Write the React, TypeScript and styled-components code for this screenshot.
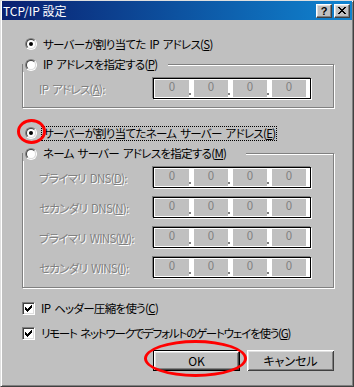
import React from "react";
import styled, { createGlobalStyle } from "styled-components";

const face = "#c0c0c0";

const GlobalStyle = createGlobalStyle`
  html, body {
    margin: 0;
    padding: 0;
    background: ${face};
  }
  body {
    font-family: "Noto Sans CJK JP", "Noto Sans", sans-serif;
    font-size: 11.5px;
    letter-spacing: -0.7px;
    word-spacing: 2px;
    font-feature-settings: "palt";
    color: #000;
  }
`;

const Window = styled.div`
  position: relative;
  box-sizing: border-box;
  width: 354px;
  height: 387px;
  background: ${face};
  border: 1px solid;
  border-color: #dfdfdf #404040 #404040 #dfdfdf;
  box-shadow: inset 1px 1px 0 #fff, inset -1px -1px 0 #808080;
  display: flex;
  flex-direction: column;
  overflow: hidden;
`;

const TitleBar = styled.div`
  height: 19px;
  margin: 0 1px;
  padding: 0 2px 0 1px;
  display: flex;
  align-items: center;
  background: linear-gradient(90deg, #0a2070 0%, #1084d0 100%);
  color: #fff;
  font-size: 12px;
  letter-spacing: 0;
  word-spacing: 0;
  line-height: 19px;
`;

const TitleText = styled.span`
  flex: 1;
  white-space: nowrap;
`;

const CaptionButton = styled.div`
  box-sizing: border-box;
  width: 16px;
  height: 14px;
  margin-left: 2px;
  background: ${face};
  border: 1px solid;
  border-color: #fff #404040 #404040 #fff;
  box-shadow: inset -1px -1px 0 #808080, inset 1px 1px 0 #dfdfdf;
  display: flex;
  align-items: center;
  justify-content: center;
  color: #000;
  font-family: "Liberation Sans", sans-serif;
  font-weight: bold;
  font-size: 11px;
  line-height: 12px;
`;

const Body = styled.div`
  display: flex;
  flex-direction: column;
  padding: 0 19px 0 21px;
`;

const OptionRow = styled.label<{ $top: number }>`
  display: flex;
  align-items: center;
  height: 16px;
  margin-top: ${(p) => p.$top}px;
  padding-left: 3px;
  gap: 4px;
  white-space: nowrap;
`;

const RadioOuter = styled.span`
  box-sizing: border-box;
  flex: none;
  width: 12px;
  height: 12px;
  border-radius: 50%;
  border: 1px solid;
  border-color: #808080 #fff #fff #808080;
  display: flex;
`;

const RadioInner = styled.span<{ $checked?: boolean }>`
  box-sizing: border-box;
  flex: 1;
  border-radius: 50%;
  border: 1px solid;
  border-color: #404040 #dfdfdf #dfdfdf #404040;
  background: #fff;
  display: flex;
  align-items: center;
  justify-content: center;

  &::after {
    content: "";
    width: 4px;
    height: 4px;
    border-radius: 50%;
    background: ${(p) => (p.$checked ? "#000" : "transparent")};
  }
`;

const Caption = styled.span<{ $focused?: boolean; $tight?: boolean }>`
  display: inline-block;
  line-height: 13px;
  padding: 0 1px;
  border: 1px dotted ${(p) => (p.$focused ? "#000" : "transparent")};
  letter-spacing: ${(p) => (p.$tight ? "-1.2px" : "inherit")};
  white-space: nowrap;
`;

const Group = styled.fieldset<{ $top: number; $bottom: number }>`
  margin: ${(p) => p.$top}px 0 0 0;
  padding: 6px 0 ${(p) => p.$bottom}px 0;
  min-width: 0;
  border: 1px solid #808080;
  box-shadow: inset 1px 1px 0 #fff, 1px 1px 0 #fff;
`;

const GroupLegend = styled.legend<{ $width: number }>`
  box-sizing: border-box;
  width: ${(p) => p.$width}px;
  height: 15px;
  padding: 0 0 0 2px;
  margin: 0;
  background: ${face};
  display: flex;
  align-items: center;
  gap: 4px;
  white-space: nowrap;
`;

const GroupRows = styled.div`
  display: flex;
  flex-direction: column;
  gap: 9px;
  padding-left: 16px;
`;

const FieldRow = styled.div`
  display: flex;
  align-items: center;
  height: 21px;
`;

const FieldLabel = styled.span`
  width: 114px;
  color: #808080;
  text-shadow: 1px 1px 0 #fff;
  white-space: nowrap;
`;

const IpBox = styled.div`
  box-sizing: border-box;
  width: 158px;
  height: 21px;
  border: 1px solid #000;
  box-shadow: -1px -1px 0 #808080, 1px 1px 0 #fff;
  background: #fff;
  padding: 1px 0 1px 1px;
  display: flex;
`;

const IpPart = styled.span`
  width: 34px;
  background: ${face};
  color: #808080;
  text-align: center;
  letter-spacing: 0;
  line-height: 12px;
`;

const IpDot = styled.span`
  width: 5px;
  display: flex;
  align-items: flex-end;
  padding-bottom: 2px;

  &::before {
    content: "";
    width: 2px;
    height: 2px;
    background: #808080;
  }
`;

const CheckRow = styled.label<{ $top: number }>`
  display: flex;
  align-items: center;
  height: 16px;
  margin-top: ${(p) => p.$top}px;
  gap: 4px;
  white-space: nowrap;
`;

const CheckBox = styled.span`
  box-sizing: border-box;
  flex: none;
  width: 13px;
  height: 13px;
  border: 1px solid;
  border-color: #808080 #fff #fff #808080;
  box-shadow: inset 1px 1px 0 #404040, inset -1px -1px 0 #dfdfdf;
  background: #fff;
  display: flex;
  align-items: center;
  justify-content: center;
`;

const ButtonRow = styled.div`
  display: flex;
  justify-content: flex-end;
  gap: 7px;
  margin-top: 9px;
`;

const PushButton = styled.button<{ $default?: boolean }>`
  box-sizing: border-box;
  width: 87px;
  height: 21px;
  padding: 0;
  font: inherit;
  font-size: 12px;
  letter-spacing: 0;
  color: #000;
  background: ${face};
  border: ${(p) => (p.$default ? "1px solid #000" : "none")};
  box-shadow: inset 1px 1px 0 #fff, inset -1px -1px 0 #404040,
    inset 2px 2px 0 #dfdfdf, inset -2px -2px 0 #808080;
  line-height: 17px;
`;

const Annotation = styled.div<{ $x: number; $y: number; $w: number; $h: number }>`
  position: absolute;
  left: ${(p) => p.$x}px;
  top: ${(p) => p.$y}px;
  width: ${(p) => p.$w}px;
  height: ${(p) => p.$h}px;
  box-sizing: border-box;
  border: 3px solid #f00;
  border-radius: 50%;
  pointer-events: none;
`;

const Radio = ({ checked }: { checked?: boolean }) => (
  <RadioOuter>
    <RadioInner $checked={checked} />
  </RadioOuter>
);

const CheckMark = () => (
  <svg width="7" height="7" viewBox="0 0 7 7" shapeRendering="crispEdges">
    {[2, 3, 4, 3, 2, 1, 0].map((y, x) => (
      <rect key={x} x={x} y={y} width="1" height="3" fill="#000" />
    ))}
  </svg>
);

const CloseGlyph = () => (
  <svg width="8" height="7" viewBox="0 0 8 7" shapeRendering="crispEdges">
    {[0, 1, 2, 3, 4, 5, 6].map((i) => (
      <g key={i} fill="#000">
        <rect x={i} y={i} width="2" height="1" />
        <rect x={6 - i} y={i} width="2" height="1" />
      </g>
    ))}
  </svg>
);

const IpField = () => (
  <IpBox>
    <IpPart>0</IpPart>
    <IpDot />
    <IpPart>0</IpPart>
    <IpDot />
    <IpPart>0</IpPart>
    <IpDot />
    <IpPart>0</IpPart>
  </IpBox>
);

const dnsRows = [
  { label: "プライマリ DNS", key: "D" },
  { label: "セカンダリ DNS", key: "N" },
  { label: "プライマリ WINS", key: "W" },
  { label: "セカンダリ WINS", key: "I" },
];

export default function App() {
  return (
    <>
      <GlobalStyle />
      <Window>
        <TitleBar>
          <TitleText>TCP/IP 設定</TitleText>
          <CaptionButton>?</CaptionButton>
          <CaptionButton>
            <CloseGlyph />
          </CaptionButton>
        </TitleBar>

        <Body>
          <OptionRow $top={16}>
            <Radio checked />
            <Caption>
              サーバーが割り当てた IP アドレス(<u>S</u>)
            </Caption>
          </OptionRow>

          <Group $top={5} $bottom={8}>
            <GroupLegend $width={145}>
              <Radio />
              <Caption>
                IP アドレスを指定する(<u>P</u>)
              </Caption>
            </GroupLegend>
            <GroupRows>
              <FieldRow>
                <FieldLabel>
                  IP アドレス(<u>A</u>):
                </FieldLabel>
                <IpField />
              </FieldRow>
            </GroupRows>
          </Group>

          <OptionRow $top={17}>
            <Radio checked />
            <Caption $focused>
              サーバーが割り当てたネーム サーバー アドレス(<u>E</u>)
            </Caption>
          </OptionRow>

          <Group $top={5} $bottom={9}>
            <GroupLegend $width={223}>
              <Radio />
              <Caption>
                ネーム サーバー アドレスを指定する(<u>M</u>)
              </Caption>
            </GroupLegend>
            <GroupRows>
              {dnsRows.map((row) => (
                <FieldRow key={row.key}>
                  <FieldLabel>
                    {row.label}(<u>{row.key}</u>):
                  </FieldLabel>
                  <IpField />
                </FieldRow>
              ))}
            </GroupRows>
          </Group>

          <CheckRow $top={12}>
            <CheckBox>
              <CheckMark />
            </CheckBox>
            <Caption>
              IP ヘッダー圧縮を使う(<u>C</u>)
            </Caption>
          </CheckRow>

          <CheckRow $top={9}>
            <CheckBox>
              <CheckMark />
            </CheckBox>
            <Caption $tight>
              リモート ネットワークでデフォルトのゲートウェイを使う(<u>G</u>)
            </Caption>
          </CheckRow>

          <ButtonRow>
            <PushButton $default>OK</PushButton>
            <PushButton>キャンセル</PushButton>
          </ButtonRow>
        </Body>

        <Annotation $x={16} $y={118} $w={29} $h={25} />
        <Annotation $x={143} $y={339} $w={103} $h={37} />
      </Window>
    </>
  );
}
